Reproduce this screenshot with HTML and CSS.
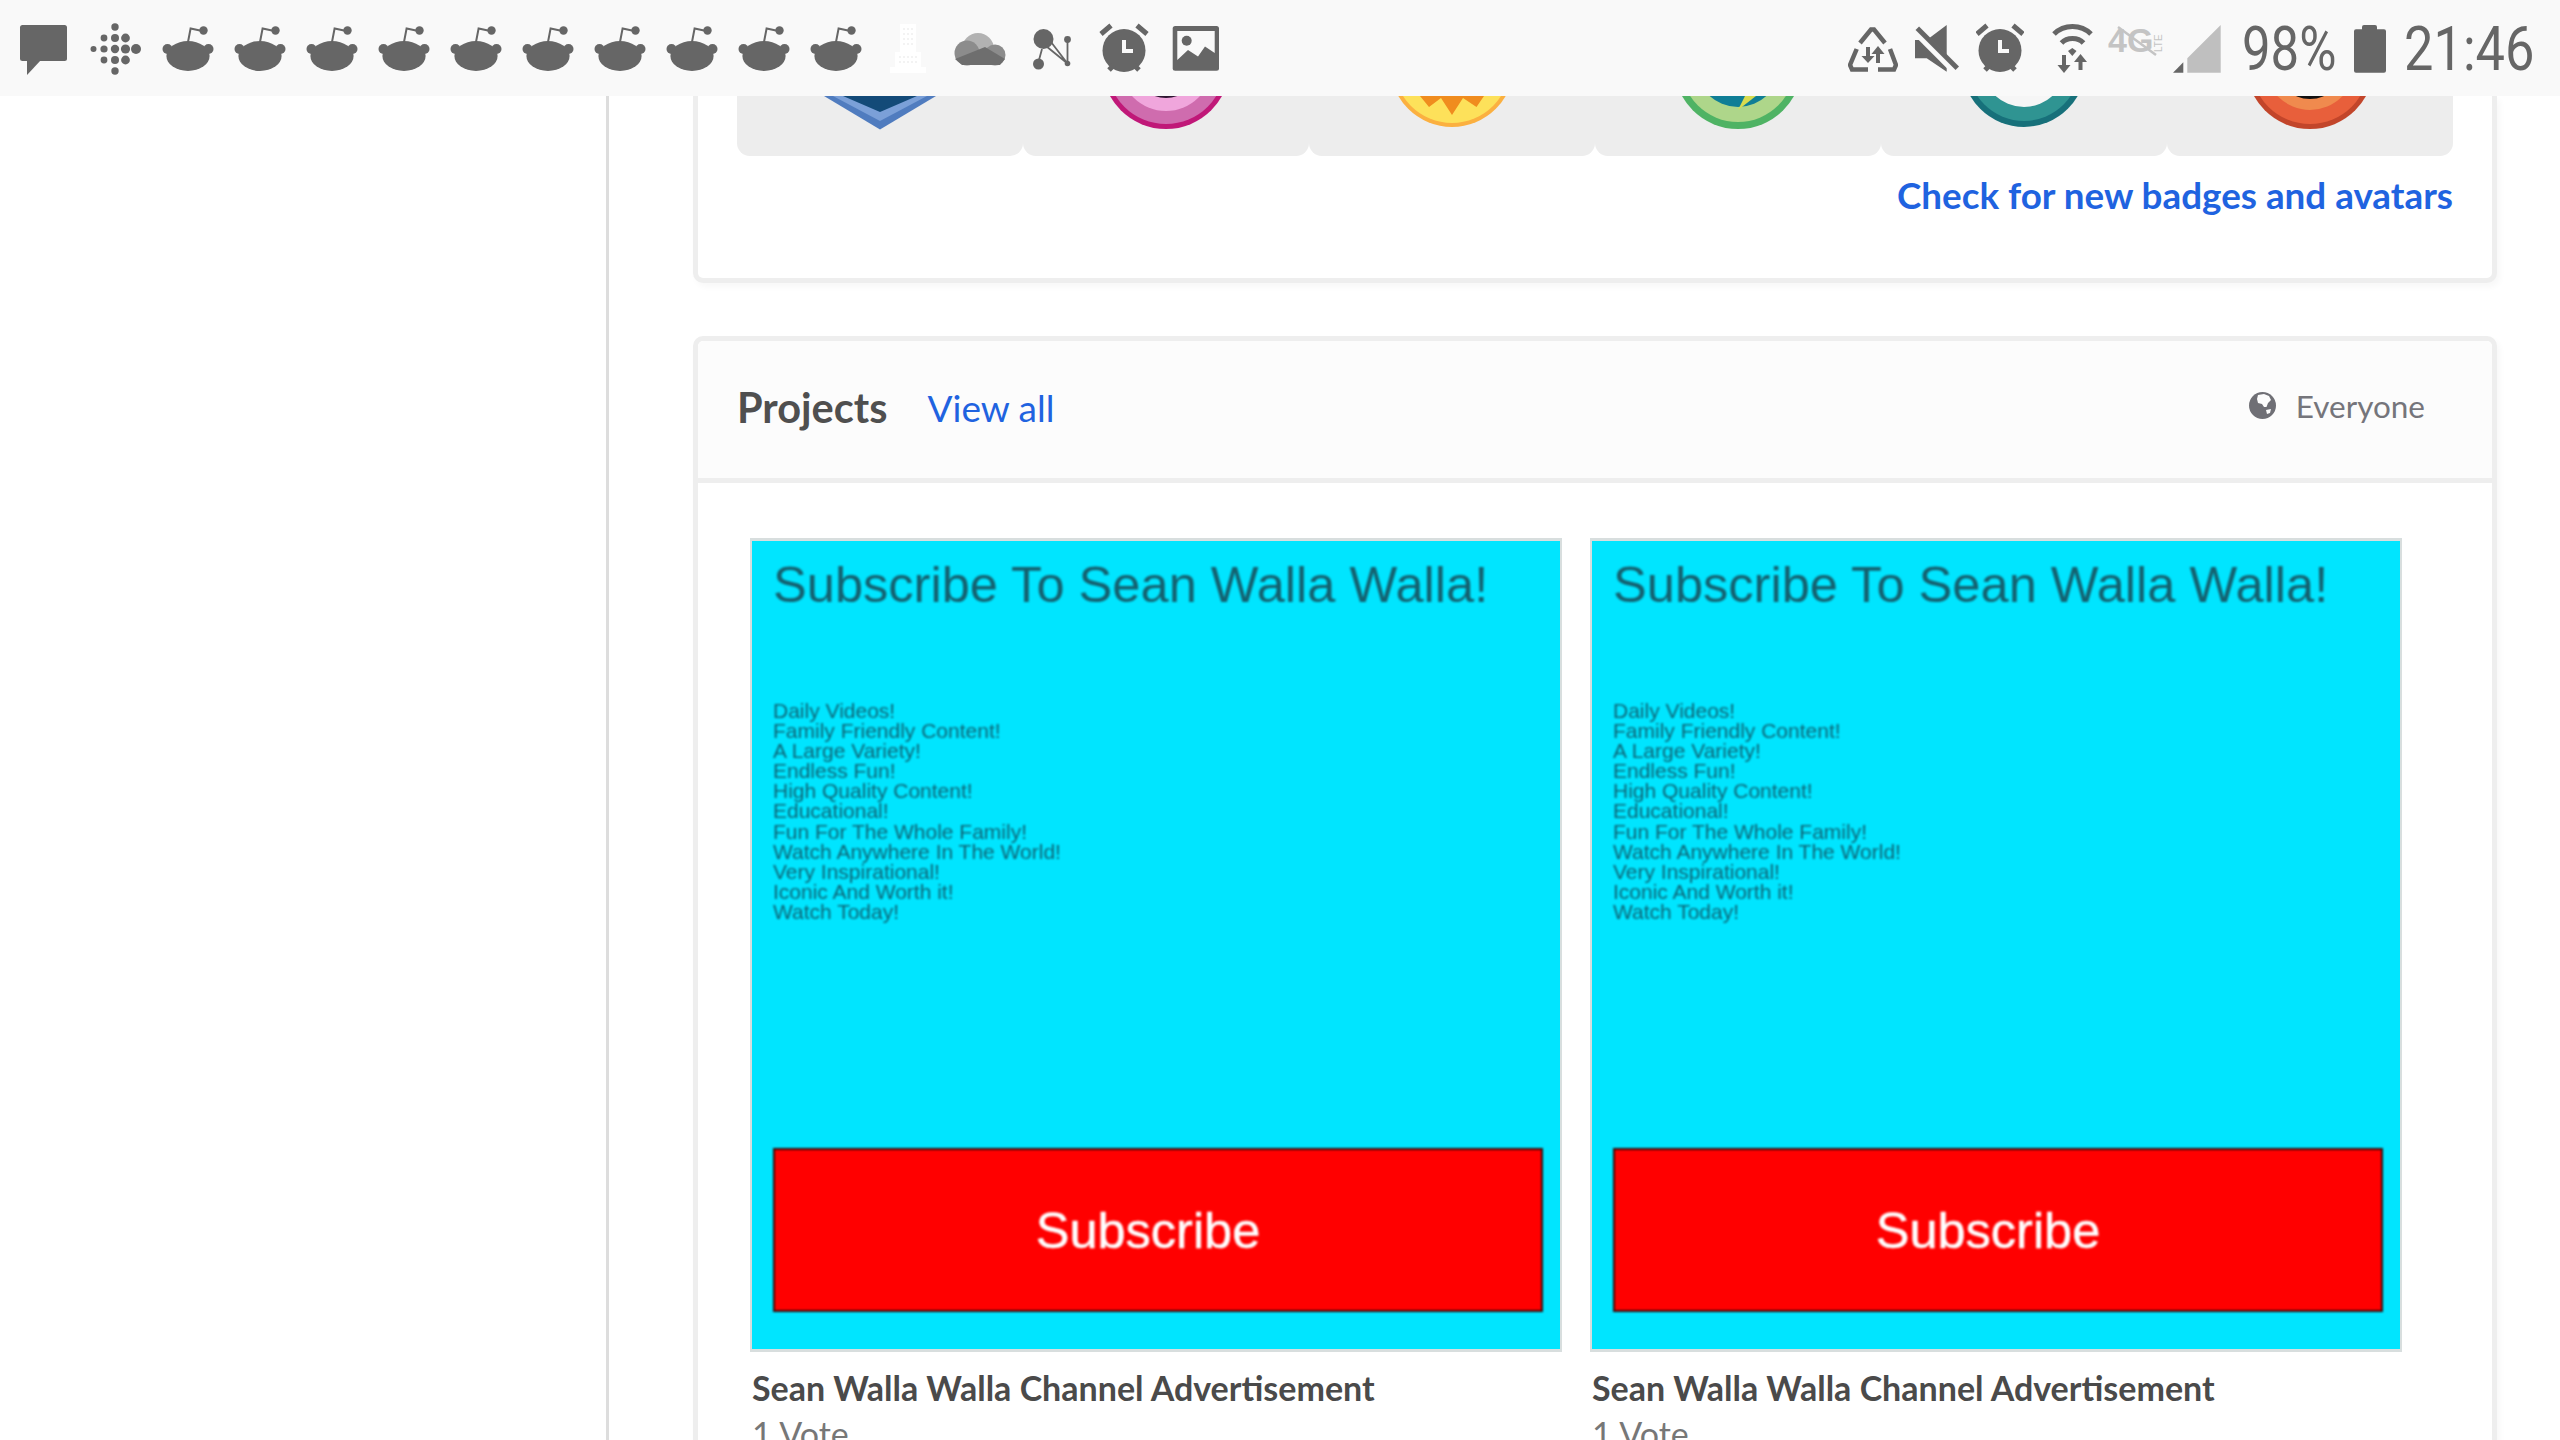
FILE: index.html
```html
<!DOCTYPE html>
<html>
<head>
  <title>Projects</title>
  <link rel="stylesheet" href="styles.css">
</head>
<body>
  <svg class="defs" width="0" height="0">
    <symbol id="reddit" viewBox="0 0 72 96">
      <circle cx="15.5" cy="49" r="5"/>
      <circle cx="56.5" cy="49" r="5"/>
      <ellipse cx="36" cy="56" rx="21.6" ry="15"/>
      <path d="M36 42 L38.6 28.5 L48 30.5" fill="none" stroke="#666" stroke-width="2"/>
      <circle cx="51.5" cy="30.5" r="4.2"/>
    </symbol>
    <symbol id="alarm" viewBox="0 0 72 96">
      <circle cx="36" cy="50.5" r="21.5"/>
      <path d="M13 34 L23 25.5 M49 25.5 L59 34 M21 70 L26 65 M46 65 L51 70" stroke="#666" stroke-width="5" fill="none"/>
      <path d="M36 40 V51 H45" stroke="#f9f9f9" stroke-width="4" fill="none"/>
    </symbol>
  </svg>

  <div class="status-bar">
    <svg class="cell" viewBox="0 0 72 96"><rect x="12" y="25" width="47" height="36" rx="2.5"/><path d="M19 60 V75 L33 60 Z"/></svg>
    <svg class="cell" viewBox="0 0 72 96">
      <circle cx="35" cy="27" r="3.7"/>
      <circle cx="24" cy="38" r="3.4"/><circle cx="35" cy="38" r="4"/><circle cx="45.5" cy="38" r="4.4"/>
      <circle cx="13.5" cy="49" r="3"/><circle cx="24" cy="49" r="3.6"/><circle cx="35" cy="49" r="4.2"/><circle cx="45.5" cy="49" r="4.6"/><circle cx="56" cy="49" r="5"/>
      <circle cx="24" cy="60" r="3.4"/><circle cx="35" cy="60" r="4"/><circle cx="45.5" cy="60" r="4.4"/>
      <circle cx="35" cy="71" r="3.7"/>
    </svg>
    <svg class="cell"><use href="#reddit"/></svg>
    <svg class="cell"><use href="#reddit"/></svg>
    <svg class="cell"><use href="#reddit"/></svg>
    <svg class="cell"><use href="#reddit"/></svg>
    <svg class="cell"><use href="#reddit"/></svg>
    <svg class="cell"><use href="#reddit"/></svg>
    <svg class="cell"><use href="#reddit"/></svg>
    <svg class="cell"><use href="#reddit"/></svg>
    <svg class="cell"><use href="#reddit"/></svg>
    <svg class="cell"><use href="#reddit"/></svg>
    <svg class="cell" viewBox="0 0 72 96">
      <path d="M28 24 H44 V52 H49 V67 H54 V73 H18 V67 H23 V52 H28 Z" fill="#fff"/>
      <path d="M31 29 H41 M31 34 H41 M31 39 H41 M31 44 H41 M27 57 H45 M27 62 H45" stroke="#f3f3f3" stroke-width="2" stroke-dasharray="2 2"/>
    </svg>
    <svg class="cell" viewBox="0 0 72 96">
      <circle cx="34" cy="49" r="16" fill="#b2b2b2"/>
      <circle cx="23" cy="53" r="12.5" fill="#8c8c8c"/>
      <circle cx="51" cy="55" r="10.5" fill="#8c8c8c"/>
      <path d="M11 59 L41 47 L61 59 L56 65 H18 Z" fill="#6e6e6e"/>
    </svg>
    <svg class="cell" viewBox="0 0 72 96">
      <circle cx="27.5" cy="39" r="10"/>
      <circle cx="22.5" cy="64" r="5.5"/>
      <circle cx="51.5" cy="39.5" r="3.4"/>
      <circle cx="51.5" cy="63.5" r="2.8"/>
      <path d="M30 46 L51.5 63.5 M35 42 L51.5 63.5 M51.5 40 V63.5 M26 49 L23 60" stroke="#666" stroke-width="1.8" fill="none"/>
    </svg>
    <svg class="cell"><use href="#alarm"/></svg>
    <svg class="cell" viewBox="0 0 72 96">
      <rect x="12.7" y="26" width="46.3" height="44.7" rx="2.5"/>
      <path d="M17.3 31 H54.7 V53 L45 46.5 L38 56.5 L28 50 L17.3 60 Z" fill="#f9f9f9"/>
      <circle cx="26.7" cy="40.7" r="5"/>
    </svg>

    <div class="status-right">
      <svg class="ic-recycle" viewBox="0 0 50 96">
        <path d="M12 43 L23 29.5 H26 L37 43 M8.7 49 L2 65 L4 69.5 H20 M42 49 L48 65 L46 69.5 H30" fill="none" stroke="#666" stroke-width="4.5"/>
        <path d="M18 47 V56 H13.5 L20 63 L26.5 56 H22 V47 Z M28 63 V54 H23.5 L30 46 L36.5 54 H32 V63 Z"/>
      </svg>
      <svg class="ic-mute" viewBox="0 0 44 96">
        <path d="M0 40 H11.7 L31.7 25 V71.7 L11.7 58.3 H0 Z"/>
        <path d="M2.3 28.3 L42.3 68.3" stroke="#f9f9f9" stroke-width="9" transform="translate(-2 2)"/>
        <path d="M2.3 28.3 L42.3 68.3" stroke="#666" stroke-width="5"/>
      </svg>
      <svg class="ic-alarm" viewBox="12 0 48 96"><use href="#alarm" x="0" y="0" width="72" height="96"/></svg>
      <svg class="ic-wifi" viewBox="0 0 42 96">
        <path d="M3 34 C13 24 30 24 40 34 M10.5 43 C16 37 27 37 32.5 43" fill="none" stroke="#666" stroke-width="5"/>
        <path d="M17 51 L21.3 48 L25.5 51 L21.3 56 Z"/>
        <path d="M11 55 V65 H6.5 L13 73 L19.5 65 H15 V55 Z M27.5 70 V62 H23 L29.5 54 L36 62 H31.5 V70 Z"/>
      </svg>
      <svg class="ic-lte" viewBox="0 0 55 96">
        <text class="lte-big" x="0" y="52">4G</text>
        <text class="lte-small" transform="translate(54 52) rotate(-90)">LTE</text>
        <path d="M10 27 L48 55" stroke="#c4c4c4" stroke-width="2.5"/>
      </svg>
      <svg class="ic-signal" viewBox="0 0 49 96">
        <path d="M14.3 58.3 L47.7 25 V72.7 H14.3 Z" fill="#bfbfbf"/>
        <path d="M0 72.7 L10.3 62.3 V72.7 Z"/>
      </svg>
      <span class="stat-text batt-text">98%</span>
      <svg class="ic-batt" viewBox="0 0 32 96">
        <path d="M8 27 Q8 25 10 25 H21 Q23 25 23 27 V29.3 H30 Q32 29.3 32 31.3 V70.7 Q32 72.7 30 72.7 H2 Q0 72.7 0 70.7 V31.3 Q0 29.3 2 29.3 H8 Z"/>
      </svg>
      <span class="stat-text clock-text">21:46</span>
    </div>
  </div>

  <div class="page">
    <div class="sidebar"></div>
    <div class="content">

      <div class="card badges-card">
        <div class="badge-strip">
          <div class="badge-cell">
            <svg class="badge" viewBox="0 0 120 34">
              <path d="M4 0 H116 L60 33.5 Z" fill="#507cbf"/>
              <path d="M13 0 H107 L60 25 Z" fill="#7ba0d8"/>
              <path d="M23 0 H97 L60 16 Z" fill="#134a78"/>
            </svg>
          </div>
          <div class="badge-cell">
            <svg class="badge" viewBox="0 0 120 34">
              <circle cx="60" cy="-31" r="64" fill="#c01878"/>
              <circle cx="60" cy="-31" r="59" fill="#cf6cae"/>
              <circle cx="60" cy="-31" r="46" fill="#f0a6dc"/>
              <circle cx="60" cy="-31" r="33" fill="#2d1530"/>
            </svg>
          </div>
          <div class="badge-cell">
            <svg class="badge" viewBox="0 0 120 34">
              <circle cx="60" cy="-31" r="62" fill="#fbb040"/>
              <circle cx="60" cy="-31" r="58" fill="#fde15a"/>
              <path d="M28 0 L37 11 L49 2 L60 19 L71 2 L84.5 11 L92 0 Z" fill="#f08c1e"/>
            </svg>
          </div>
          <div class="badge-cell">
            <svg class="badge" viewBox="0 0 120 34">
              <circle cx="60" cy="-31" r="64" fill="#4fb364"/>
              <circle cx="60" cy="-31" r="57" fill="#aed68a"/>
              <circle cx="60" cy="-31" r="42" fill="#0f7e96"/>
              <path d="M67 0 H78 L60 14 Z" fill="#d8dc50"/>
            </svg>
          </div>
          <div class="badge-cell">
            <svg class="badge" viewBox="0 0 120 34">
              <circle cx="60" cy="-31" r="62" fill="#17707a"/>
              <circle cx="60" cy="-31" r="56" fill="#2f9492"/>
              <circle cx="60" cy="-31" r="42" fill="#f6f6f6"/>
            </svg>
          </div>
          <div class="badge-cell">
            <svg class="badge" viewBox="0 0 120 34">
              <circle cx="60" cy="-31" r="64" fill="#c2452a"/>
              <circle cx="60" cy="-31" r="59" fill="#e85f3b"/>
              <circle cx="60" cy="-31" r="45" fill="#f08a4e"/>
              <circle cx="60" cy="-31" r="34" fill="#111"/>
            </svg>
          </div>
        </div>
        <div class="check-row"><a class="check-link">Check for new badges and avatars</a></div>
      </div>

      <div class="card projects-card">
        <div class="projects-head">
          <span class="projects-title">Projects</span>
          <a class="view-all">View all</a>
          <div class="everyone">
            <svg class="globe" viewBox="0 0 27 27">
              <circle cx="13.5" cy="13.5" r="13.5" fill="#6f6f75"/>
              <path d="M9 3 L15 2 L20 4 L22 8 L19 11 L17.5 15 L15 15 L13 12 L9 11 L8 7 Z" fill="#fcfcfc"/>
              <path d="M17 18 L22 17 L21 21 L18 22 Z" fill="#fcfcfc"/>
            </svg>
            <span>Everyone</span>
          </div>
        </div>
        <div class="projects-grid">
          <div class="project">
            <div class="poster">
              <div class="poster-title">Subscribe To Sean Walla Walla!</div>
              <div class="poster-list">
                Daily Videos!<br>Family Friendly Content!<br>A Large Variety!<br>Endless Fun!<br>High Quality Content!<br>Educational!<br>Fun For The Whole Family!<br>Watch Anywhere In The World!<br>Very Inspirational!<br>Iconic And Worth it!<br>Watch Today!
              </div>
              <div class="poster-btn">Subscribe</div>
            </div>
            <div class="project-name">Sean Walla Walla Channel Advertisement</div>
            <div class="project-votes">1 Vote</div>
          </div>
          <div class="project">
            <div class="poster">
              <div class="poster-title">Subscribe To Sean Walla Walla!</div>
              <div class="poster-list">
                Daily Videos!<br>Family Friendly Content!<br>A Large Variety!<br>Endless Fun!<br>High Quality Content!<br>Educational!<br>Fun For The Whole Family!<br>Watch Anywhere In The World!<br>Very Inspirational!<br>Iconic And Worth it!<br>Watch Today!
              </div>
              <div class="poster-btn">Subscribe</div>
            </div>
            <div class="project-name">Sean Walla Walla Channel Advertisement</div>
            <div class="project-votes">1 Vote</div>
          </div>
        </div>
      </div>

    </div>
  </div>
</body>
</html>
```

FILE: styles.css
```css
html, body {
  margin: 0;
  padding: 0;
  height: 1440px;
  overflow: hidden;
  background-color: #fff;
  font-family: 'Lato', Arial, sans-serif;
}

.defs {
  display: none;
}

/* status bar */
.status-bar {
  display: flex;
  height: 96px;
  padding-left: 8px;
  background-color: #f9f9f9;
  fill: #666;
}

.status-bar svg {
  flex: none;
  height: 96px;
}

.cell {
  width: 72px;
}

.status-right {
  display: flex;
  margin-left: auto;
  padding-right: 27px;
}

.ic-recycle { width: 50px; }
.ic-mute { width: 44px; margin-left: 17px; }
.ic-alarm { width: 48px; margin-left: 17px; }
.ic-wifi { width: 42px; margin-left: 27px; }
.ic-lte { width: 55px; margin-left: 15px; }
.ic-signal { width: 49px; margin-left: 10px; }
.ic-batt { width: 32px; margin-left: 19px; }

.lte-big {
  font-family: 'Liberation Sans', Arial, sans-serif;
  font-size: 34px;
  font-weight: bold;
  fill: #c4c4c4;
}

.lte-small {
  font-family: 'Liberation Sans', Arial, sans-serif;
  font-size: 10px;
  fill: #c4c4c4;
}

.stat-text {
  display: block;
  font-family: 'Roboto', Arial, sans-serif;
  font-size: 62px;
  line-height: 96px;
  margin-top: 1px;
  color: #666;
  white-space: nowrap;
  transform-origin: left center;
}

.batt-text {
  width: 92px;
  margin-left: 20px;
  margin-right: 1px;
  transform: scaleX(.82);
}

.clock-text {
  width: 128px;
  margin-left: 18px;
  margin-right: 1px;
  transform: scaleX(.845);
}

/* page */
.page {
  display: flex;
  height: 1344px;
  overflow: hidden;
}

.sidebar {
  flex: none;
  width: 606px;
  border-right: 3px solid #ddd;
}

.content {
  flex: 1;
  padding: 0 63px 0 84px;
}

.card {
  border: 5px solid #eee;
  border-radius: 10px;
  background-color: #fff;
  box-shadow: 3px 4px 6px rgba(0, 0, 0, 0.03);
}

.badges-card {
  height: 182px;
  padding: 0 39px 0 39px;
  border-top: none;
  border-top-left-radius: 0;
  border-top-right-radius: 0;
}

.badge-strip {
  display: flex;
}

.badge-cell {
  flex: 1;
  height: 60px;
  display: flex;
  justify-content: center;
  background-color: #ededed;
  border-radius: 0 0 13px 13px;
}

.badge {
  width: 120px;
  height: 34px;
  filter: blur(0.6px);
}

.check-row {
  margin-top: 17px;
  text-align: right;
}

.check-link {
  font-size: 36.8px;
  font-weight: bold;
  color: #1f63e0;
}

.projects-card {
  margin-top: 53px;
}

.projects-head {
  display: flex;
  align-items: center;
  height: 137px;
  padding: 0 67px 0 39px;
  background-color: #fcfcfc;
  border-bottom: 5px solid #eee;
  border-radius: 6px 6px 0 0;
}

.projects-title {
  margin-top: -6px;
  font-size: 41.5px;
  font-weight: bold;
  color: #4f4f4f;
}

.view-all {
  margin-top: -4px;
  margin-left: 40px;
  font-size: 37px;
  color: #1f63e0;
}

.everyone {
  display: flex;
  align-items: center;
  gap: 20px;
  margin-left: auto;
  margin-top: -8px;
  font-size: 31.5px;
  color: #75757b;
}

.globe {
  width: 27px;
  height: 27px;
}

.projects-grid {
  display: grid;
  grid-template-columns: 812px 812px;
  gap: 28px;
  padding: 55px 0 0 52px;
}

.poster {
  display: flex;
  flex-direction: column;
  box-sizing: border-box;
  height: 814px;
  padding: 16px 16px 37px 21px;
  background-color: #00e5ff;
  border: 3px solid #d8dede;
  border-width: 3px 2px;
  font-family: 'Liberation Sans', Arial, sans-serif;
}

.poster-title {
  font-size: 50.6px;
  line-height: 56px;
  white-space: nowrap;
  color: #14606f;
  filter: blur(1px);
}

.poster-list {
  margin-top: 88px;
  font-size: 21px;
  line-height: 20.1px;
  color: #0f5565;
  opacity: 0.9;
  filter: blur(1.1px);
}

.poster-btn {
  display: flex;
  align-items: center;
  justify-content: center;
  box-sizing: border-box;
  width: 770px;
  height: 164px;
  margin-top: auto;
  padding-right: 20px;
  background-color: #f00;
  border: 2px solid #3a0a0a;
  font-size: 50.5px;
  color: #fff;
  -webkit-text-stroke: 0.5px #fff;
  filter: blur(1px);
}

.project-name {
  margin-top: 15px;
  padding-left: 2px;
  font-size: 34px;
  font-weight: bold;
  color: #4a4a4a;
  white-space: nowrap;
}

.project-votes {
  margin-top: 5px;
  padding-left: 2px;
  font-size: 34px;
  color: #777;
}
```
